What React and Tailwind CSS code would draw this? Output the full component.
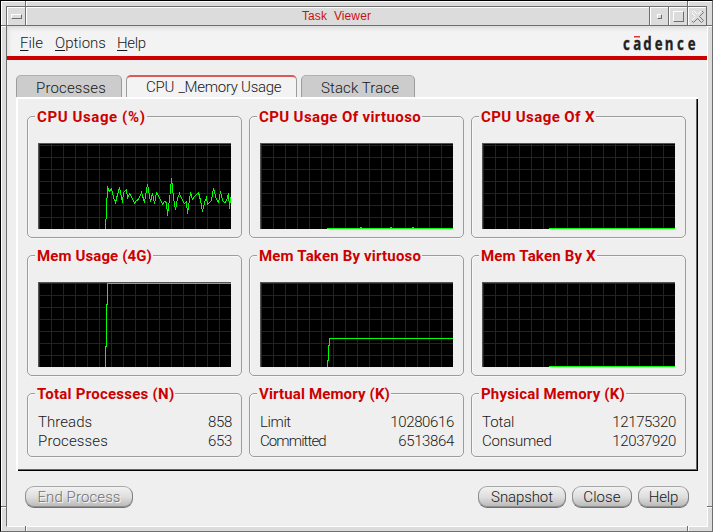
const CPU_TRACE =
  "67,86 68,66 69,44 71,48 73,45 75,54 77,59 79,51 81,44 84,59 85,49 88,46 89,55 91,50 93,53 96,60 98,57 100,56 103,49 106,59 109,41 112,58 114,50 116,60 118,49 120,52 124,61 126,58 128,59 129,72 132,47 133,35 135,54 137,66 139,55 141,50 144,57 146,60 148,58 149,70 152,49 154,56 156,53 160,49 162,57 164,68 166,59 168,54 169,61 173,57 175,45 178,56 180,59 182,48 184,57 186,59 188,58 190,50 191,65 192,54 193,54";

const CHARTS = [
  { title: "CPU Usage (%)", spacing: "tracking-[0.6px]", trace: CPU_TRACE },
  {
    title: "CPU Usage Of virtuoso",
    spacing: "tracking-[0.38px]",
    trace: "66,85 100,85 100,84 101,84 101,85 130,85 130,84 131,84 131,85 152,85 152,84 153,84 153,85 193,85",
  },
  { title: "CPU Usage Of X", spacing: "tracking-[0.42px]", trace: "66,85 193,85" },
  { title: "Mem Usage (4G)", spacing: "tracking-[0.12px]", trace: "67,85 67,64 68,64 68,22 69,22 69,1 193,1" },
  {
    title: "Mem Taken By virtuoso",
    spacing: "tracking-[0.18px]",
    trace: "67,85 67,78 68,78 68,63 69,63 69,56 193,56",
  },
  { title: "Mem Taken By X", spacing: "tracking-[0.18px]", trace: "66,84 193,84" },
];

const STATS = [
  {
    title: "Total Processes (N)",
    spacing: "tracking-[0.25px]",
    rows: [
      ["Threads", "tracking-[0.05px]", "858"],
      ["Processes", "tracking-[0.15px]", "653"],
    ],
  },
  {
    title: "Virtual Memory (K)",
    spacing: "tracking-[0.14px]",
    rows: [
      ["Limit", "tracking-[-0.4px]", "10280616"],
      ["Committed", "tracking-[-0.9px]", "6513864"],
    ],
  },
  {
    title: "Physical Memory (K)",
    spacing: "tracking-[0.18px]",
    rows: [
      ["Total", "tracking-[-0.1px]", "12175320"],
      ["Consumed", "tracking-[-0.25px]", "12037920"],
    ],
  },
];

function Group({ title, spacing, height, children }) {
  return (
    <section
      className={`relative w-[215px] rounded-[5px] border border-[#9c9c9c] shadow-[inset_1px_1px_0_#f8f8f8,0_1px_0_#f8f8f8] ${height}`}
    >
      <h2
        className={`absolute top-[-9px] left-[7px] h-[18px] bg-[#efefef] pr-px pl-[2px] text-[15px] leading-[19px] font-bold whitespace-nowrap text-[#cc0000] ${spacing}`}
      >
        {title}
      </h2>
      {children}
    </section>
  );
}

function Chart({ trace, height, firstLine }) {
  return (
    <svg className="block bg-black" width="193" height={height} shapeRendering="crispEdges">
      <g fill="#003c00">
        {Array.from({ length: 16 }, (_, i) => (
          <rect key={i} x={1 + i * 12} y="0" width="1" height={height} />
        ))}
        {Array.from({ length: 8 }, (_, i) => (
          <rect key={i} x="0" y={firstLine + i * 12} width="193" height="1" />
        ))}
      </g>
      <rect width="193" height="1" fill="#525552" />
      <rect width="1" height={height} fill="#525552" />
      <polyline points={trace} transform="translate(.5 .5)" fill="none" stroke="#00ff00" />
    </svg>
  );
}

function PushButton({ width, disabled, spacing, children }) {
  const color = disabled ? "text-[#707070] [text-shadow:1px_1px_0_#fafafa]" : "text-[#181818]";
  return (
    <button
      disabled={disabled}
      className={`h-[22px] rounded-[9px] border border-t-[#a8a8a8] border-r-[#808080] border-b-[#707070] border-l-[#909090] bg-linear-to-b from-[#f2f2f2] via-[#dedede] to-[#b8b8b8] text-center text-[15px] leading-[20px] shadow-[inset_0_-1px_0_#909090] ${color} ${width} ${spacing}`}
    >
      {children}
    </button>
  );
}

function Notch({ className }) {
  return <i className={`absolute bg-[#6e6e6e] ${className}`} />;
}

export default function App() {
  return (
    <div className="relative flex h-[532px] w-[713px] flex-col overflow-hidden border border-t-black border-r-[#6e6e6e] border-b-[#6e6e6e] border-l-black bg-[#dcdcdc] pt-[5px] pr-1 pb-1 pl-[5px] font-['Roboto',sans-serif] font-light text-[#181818] shadow-[inset_1px_1px_0_#ffffff]">
      <Notch className="top-0 left-6 h-[5px] w-px shadow-[1px_0_0_#fff]" />
      <Notch className="top-0 left-[686px] h-[5px] w-px shadow-[1px_0_0_#fff]" />
      <Notch className="top-6 left-0 h-px w-[5px] shadow-[0_1px_0_#fff]" />
      <Notch className="top-6 right-0 h-px w-[5px] shadow-[0_1px_0_#fff]" />
      <Notch className="top-[505px] left-0 h-px w-[5px] shadow-[0_1px_0_#fff]" />
      <Notch className="top-[505px] right-0 h-px w-[5px] shadow-[0_1px_0_#fff]" />
      <Notch className="bottom-0 left-6 h-[5px] w-px shadow-[1px_0_0_#fff]" />
      <Notch className="bottom-0 left-[686px] h-[5px] w-px shadow-[1px_0_0_#fff]" />

      <header className="flex h-5 w-[701px] shrink-0 border border-[#6e6e6e] bg-[#dcdcdc]">
        <div className="flex w-[19px] items-center justify-center border-r border-[#6e6e6e] shadow-[inset_1px_1px_0_#fff]">
          <div className="mt-px h-[5px] w-[11px] border border-t-white border-r-[#6e6e6e] border-b-[#6e6e6e] border-l-white" />
        </div>
        <h1 className="flex-1 pl-[276px] font-['Liberation_Sans',sans-serif] text-[12px] leading-[18px] font-normal tracking-[0.1px] text-[#cc1010] shadow-[inset_1px_1px_0_#fff]">
          Task&nbsp; Viewer
        </h1>
        <div className="flex w-[19px] items-center justify-center border-l border-[#6e6e6e] shadow-[inset_1px_1px_0_#fff]">
          <div className="mt-px h-[5px] w-[5px] border border-t-white border-r-[#6e6e6e] border-b-[#6e6e6e] border-l-white" />
        </div>
        <div className="flex w-[19px] items-center justify-center border-l border-[#6e6e6e] shadow-[inset_1px_1px_0_#fff]">
          <div className="mt-px h-[11px] w-[11px] border border-t-white border-r-[#6e6e6e] border-b-[#6e6e6e] border-l-white" />
        </div>
        <div className="flex w-[19px] items-center justify-center border-l border-[#6e6e6e] shadow-[inset_1px_1px_0_#fff]">
          <svg width="13" height="13" viewBox="0 0 13 13" fill="#dcdcdc">
            <path d="M.5 2.5L2.5.5L6.5 4.5L10.5.5L12.5 2.5L8.5 6.5L12.5 10.5L10.5 12.5L6.5 8.5L2.5 12.5L.5 10.5L4.5 6.5Z" stroke="#777" />
            <path d="M4.5 6.5L.5 2.5L2.5.5L6.5 4.5L10.5.5M.5 10.5L4.5 6.5" stroke="#fff" fill="none" />
          </svg>
        </div>
      </header>

      <main className="flex w-[702px] flex-1 flex-col border-r border-b border-l border-r-white border-b-white border-l-[#6e6e6e] bg-[#efefef]">
        <nav className="flex h-[30px] items-center bg-[#f3f3f3] pr-2 pl-[13px] text-[15px] shadow-[inset_4px_5px_4px_-3px_#d8d8d8]">
          <span className="w-[35px] pt-[5px]"><u className="underline-offset-[2px]">F</u>ile</span>
          <span className="w-[62px] pt-[5px]"><u className="underline-offset-[2px]">O</u>ptions</span>
          <span className="pt-[5px] tracking-[-0.3px]"><u className="underline-offset-[2px]">H</u>elp</span>
          <svg className="ml-auto" width="79" height="30" aria-label="cadence">
            <text
              transform="translate(0 24) scale(.76 1)"
              x="4 17.6 30.6 45.6 59 75 89"
              strokeWidth=".3"
              className="fill-[#222222] stroke-[#222222] font-['Open_Sans'] text-[17.5px] font-bold"
            >
              cadence
            </text>
            <rect x="14" y="10" width="6" height="1.5" fill="#e03038" />
          </svg>
        </nav>
        <div className="h-1 bg-[#cc0000]" />

        <div className="mt-[15px] ml-[9px] flex h-[22px] gap-1 text-[15px]">
          <div className="w-[106px] rounded-t-[5px] border border-b-0 border-[#9c9c9c] border-t-[#b0b0b0] bg-[#cccccc] pl-[19px] leading-6 tracking-[0.15px]">
            Processes
          </div>
          <div className="w-[171px] overflow-hidden rounded-t-[5px] border-x border-t-2 border-x-[#9c9c9c] border-t-[#d95a5a] bg-[#f3f3f3] pl-[19px] leading-[21px] tracking-[-0.28px] whitespace-nowrap">
            CPU<span className="ml-px"> _Memory Usage</span>
          </div>
          <div className="w-[114px] rounded-t-[5px] border border-b-0 border-[#9c9c9c] border-t-[#b0b0b0] bg-[#cccccc] pl-[19px] leading-6 tracking-[0.1px]">
            Stack Trace
          </div>
        </div>

        <div className="ml-[9px] h-[374px] w-[682px] border-t-2 border-l-2 border-white pt-[17px] pl-[9px] shadow-[inset_-1px_-1px_0_#000,inset_-2px_-2px_0_#666]">
          <div className="grid grid-cols-[repeat(3,215px)] gap-x-[7px] gap-y-[17px]">
            {CHARTS.map((c, i) => (
              <Group key={c.title} title={c.title} spacing={c.spacing} height={i < 3 ? "h-[122px]" : "h-[121px]"}>
                <div className="pt-[26px] pl-[10px]">
                  <Chart trace={c.trace} height={i < 3 ? 86 : 85} firstLine={i < 3 ? 2 : 1} />
                </div>
              </Group>
            ))}
            {STATS.map((s) => (
              <Group key={s.title} title={s.title} spacing={s.spacing} height="h-[64px]">
                <dl className="pt-[19px] pr-[9px] pl-[10px] text-[15px] leading-[19px]">
                  {s.rows.map(([name, spacing, value]) => (
                    <div key={name} className="flex justify-between">
                      <dt className={spacing}>{name}</dt>
                      <dd className="tracking-[-0.35px]">{value}</dd>
                    </div>
                  ))}
                </dl>
              </Group>
            ))}
          </div>
        </div>

        <footer className="mt-[15px] flex gap-[6px] pr-[18px] pl-[18px]">
          <PushButton width="w-[108px]" spacing="mr-auto tracking-[0.1px]" disabled>End Process</PushButton>
          <PushButton width="w-[88px]" spacing="tracking-[-0.1px]">Snapshot</PushButton>
          <PushButton width="w-[60px]" spacing="tracking-[0.1px]">Close</PushButton>
          <PushButton width="w-[51px]" spacing="tracking-[-0.2px]">Help</PushButton>
        </footer>
      </main>
    </div>
  );
}
